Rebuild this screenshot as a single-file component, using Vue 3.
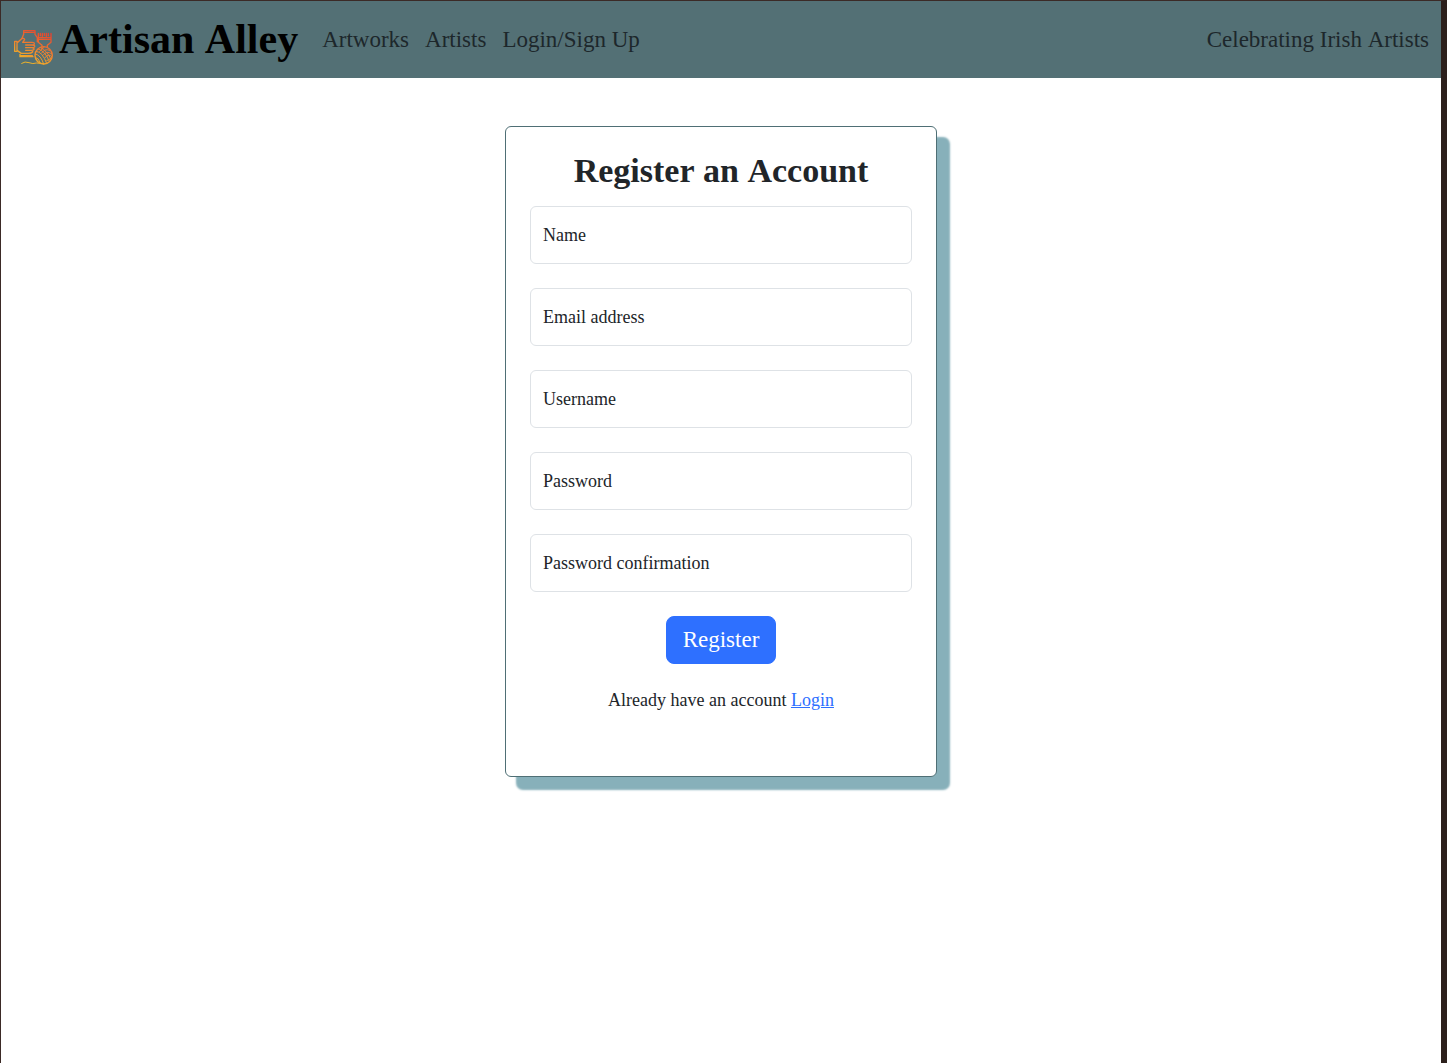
<script setup>
import { reactive } from 'vue'

const links = ['Artworks', 'Artists', 'Login/Sign Up']

const fields = [
  { id: 'name', label: 'Name', type: 'text' },
  { id: 'email', label: 'Email address', type: 'email' },
  { id: 'username', label: 'Username', type: 'text' },
  { id: 'password', label: 'Password', type: 'password' },
  { id: 'confirmation', label: 'Password confirmation', type: 'password' },
]

const form = reactive({ name: '', email: '', username: '', password: '', confirmation: '' })
</script>

<template>
  <div class="page">
    <header class="navbar">
      <a class="brand" href="#">
        <svg class="logo" viewBox="0 0 126 108" fill="none" aria-hidden="true">
          <defs>
            <linearGradient id="craft" x1="84" y1="0" x2="40" y2="100" gradientUnits="userSpaceOnUse">
              <stop offset="0" stop-color="#e5402f" />
              <stop offset="0.5" stop-color="#ee7a30" />
              <stop offset="1" stop-color="#efb428" />
            </linearGradient>
          </defs>
          <g stroke="url(#craft)" stroke-width="4" stroke-linecap="round" stroke-linejoin="round">
            <path d="M32 16V5H66V16L73 26V38M32 16L27 28M32 10H66" />
            <path d="M5 37H12V67H5ZM12 42L26 29Q33 26 35 32L29 40H57Q65 40 64 45Q63 48 57 48H38M57 48Q66 48 65 53Q64 56 56 56H38M57 56Q64 57 63 61Q61 64 54 64H38M55 64Q61 66 58 70Q55 73 46 73H25L12 64" />
            <path d="M21 76V83H60M23 80H58" />
            <path d="M76 13V26H114V13M82 13V20M88 13V22M94 13V19M100 13V22M106 13V20M76 26V40L87 49V58M114 26V40L103 49V55M76 31H114" />
            <circle cx="92" cy="79" r="26" />
          </g>
          <g stroke="url(#craft)" stroke-width="3" stroke-linecap="round">
            <path d="M70 67Q88 68 101 103M67 75Q83 77 92 105M66 84Q77 86 83 103M76 60Q96 65 109 97M83 56Q101 64 114 90M91 78Q101 63 117 75M86 72Q96 57 110 64M80 67L94 54M96 86Q106 72 117 83M101 95L116 87" />
            <path d="M26 103Q36 96 48 101T70 102L92 104" />
          </g>
        </svg>
        <span>Artisan Alley</span>
      </a>
      <nav class="links">
        <a v-for="link in links" :key="link" href="#">{{ link }}</a>
      </nav>
      <span class="tagline">Celebrating Irish Artists</span>
    </header>

    <main class="content">
      <form class="card" @submit.prevent>
        <h1>Register an Account</h1>
        <div v-for="field in fields" :key="field.id" class="field">
          <input :id="field.id" v-model="form[field.id]" :type="field.type" />
          <label v-show="!form[field.id]" :for="field.id">{{ field.label }}</label>
        </div>
        <button type="submit">Register</button>
        <p>Already have an account <a href="#">Login</a></p>
      </form>
    </main>
  </div>
</template>

<style>
body {
  margin: 0;
  background: #fff;
}
</style>

<style scoped>
.page {
  box-sizing: border-box;
  min-height: 100vh;
  border: solid #3b2a26;
  border-width: 1px 6px 0 1px;
  border-right-color: #2c201c;
  background: #fff;
  color: #212529;
  font-family: "Liberation Serif", serif;
  font-size: 18px;
  line-height: 24px;
  font-kerning: none;
}

.navbar {
  display: flex;
  align-items: center;
  padding: 8px 12px;
  background: #537075;
  font-size: 23px;
}

.brand {
  display: flex;
  align-items: center;
  gap: 4px;
  margin-right: 24px;
  color: #000;
  font-size: 42px;
  font-weight: 700;
  line-height: 61px;
  text-decoration: none;
}

.logo {
  width: 42px;
  height: 36px;
  margin-top: 14px;
}

.links {
  display: flex;
  gap: 16px;
}

.links a,
.tagline {
  color: #1d272b;
  text-decoration: none;
}

.tagline {
  margin-left: auto;
}

.content {
  display: flex;
  justify-content: center;
  padding: 48px 0;
}

.card {
  display: flex;
  flex-direction: column;
  box-sizing: border-box;
  width: 30%;
  min-width: 320px;
  padding: 24px 24px 64px;
  border: 1px solid #4f6f75;
  border-radius: 6px;
  background: #fff;
  box-shadow: 12px 12px 2px 1px #87b0ba;
}

h1 {
  margin: 0 0 16px;
  font-size: 34px;
  font-weight: 700;
  line-height: 39px;
  text-align: center;
}

.field {
  display: grid;
  margin-bottom: 24px;
}

.field input,
.field label {
  grid-area: 1 / 1;
}

.field input {
  box-sizing: border-box;
  width: 100%;
  height: 58px;
  padding: 0 12px;
  border: 1px solid #dee2e6;
  border-radius: 6px;
  background: #fff;
  color: inherit;
  font: inherit;
}

.field label {
  align-self: center;
  justify-self: start;
  padding-left: 13px;
}

button {
  align-self: center;
  height: 48px;
  padding: 0 16px;
  border: 1px solid #2e70ff;
  border-radius: 8px;
  background: #2e70ff;
  color: #fff;
  font: inherit;
  font-size: 23px;
}

p {
  margin: 24px 0 0;
  text-align: center;
}

p a {
  color: #2e70ff;
}
</style>
